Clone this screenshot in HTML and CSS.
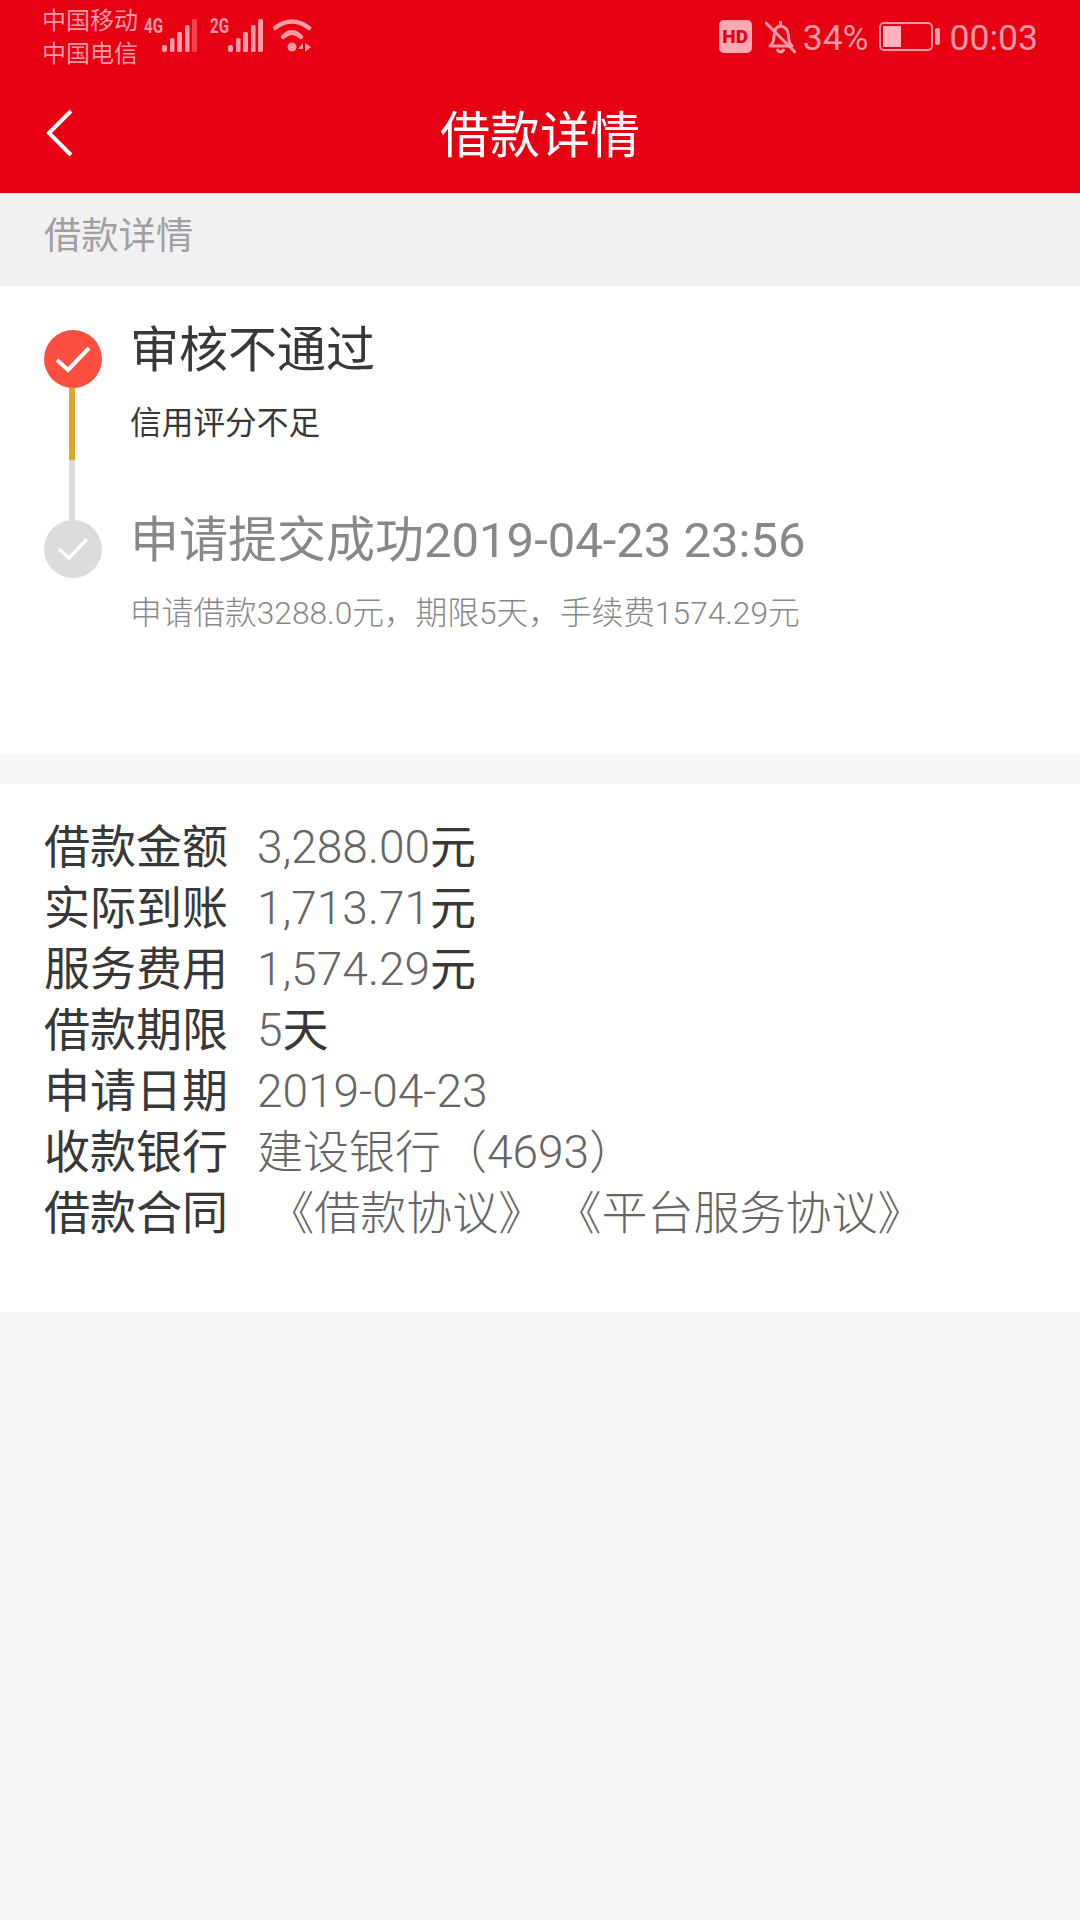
FILE: index.html
```html
<!DOCTYPE html>
<html lang="zh-CN">
<head>
<meta charset="utf-8">
<title>借款详情</title>
<link rel="stylesheet" href="styles.css">
</head>
<body>
<header class="app-header">
  <div class="status-bar">
    <div class="status-left">
      <div class="carriers"><span>中国移动</span><span>中国电信</span></div>
      <div class="signal">
        <span class="net">4G</span>
        <svg class="bars" width="36" height="34" viewBox="0 0 36 34"><g class="bar-fill"><rect x="0" y="26" width="5" height="7" rx="2"/><rect x="8" y="19" width="4.500" height="14" rx="1.500"/><rect x="15" y="13" width="5" height="20" rx="1.500"/><rect x="23" y="6" width="4.500" height="27" rx="1.500"/><rect class="bar-dim" x="30" y="0" width="5" height="33" rx="1.500"/></g></svg>
      </div>
      <div class="signal second">
        <span class="net">2G</span>
        <svg class="bars" width="36" height="34" viewBox="0 0 36 34"><g class="bar-fill"><rect x="0" y="26" width="5" height="7" rx="2"/><rect x="8" y="19" width="4.500" height="14" rx="1.500"/><rect x="15" y="13" width="5" height="20" rx="1.500"/><rect x="23" y="6" width="4.500" height="27" rx="1.500"/><rect x="30" y="0" width="5" height="33" rx="1.500"/></g></svg>
      </div>
      <svg class="wifi" width="40" height="34" viewBox="0 0 40 34">
        <path class="wifi-arc" d="M2 9 Q19 -4 36 9"/>
        <path class="wifi-arc" d="M10 18 Q19 9 28 18"/>
        <circle class="wifi-dot" cx="19" cy="28" r="4.500"/>
        <path class="wifi-dot" d="M30 24 L25 30 L30 30 Z M32 33 L32 24 L38 28 Z"/>
      </svg>
    </div>
    <div class="status-right">
      <span class="hd">HD</span>
      <svg class="bell" width="31" height="33" viewBox="0 0 31 33">
        <path class="stroke-pink" d="M5 25 Q9 22 9 15 Q9 6 15.500 5 Q23 6 23.500 15 Q23.500 22 27 25 Z"/>
        <path class="stroke-pink" d="M12.500 29 Q15.500 33 18.500 29"/>
        <path class="stroke-pink" d="M15.500 1 V5"/>
        <path class="stroke-pink" d="M1 2 L30 31"/>
      </svg>
      <span class="pct">34%</span>
      <div class="battery"><div class="battery-body"><div class="battery-level"></div></div><div class="battery-nub"></div></div>
      <span class="clock">00:03</span>
    </div>
  </div>
  <div class="nav-bar">
    <svg class="back" width="28" height="50" viewBox="0 0 28 50"><path d="M26 3 L4 25 L26 47"/></svg>
    <h1>借款详情</h1>
  </div>
</header>

<div class="section-label">借款详情</div>

<section class="timeline">
  <div class="step step-first">
    <div class="marker">
      <svg class="dot" width="58" height="58" viewBox="0 0 58 58"><circle class="dot-red" cx="29" cy="29" r="29"/><path class="dot-check" d="M13 30 L24 40 L45 18"/></svg>
      <div class="line line-orange"></div>
      <div class="line line-grey"></div>
    </div>
    <div class="step-body">
      <div class="step-title">审核不通过</div>
      <div class="step-note">信用评分不足</div>
    </div>
  </div>
  <div class="step step-muted">
    <div class="marker">
      <svg class="dot" width="58" height="58" viewBox="0 0 58 58"><circle class="dot-grey" cx="29" cy="29" r="29"/><path class="dot-check thin" d="M15 29 L25 38 L43 19"/></svg>
    </div>
    <div class="step-body">
      <div class="step-title">申请提交成功2019-04-23 23:56</div>
      <div class="step-note">申请借款3288.0元，期限5天，手续费1574.29元</div>
    </div>
  </div>
</section>

<section class="details">
  <div class="row"><span class="key">借款金额</span><span class="val">3,288.00<em>元</em></span></div>
  <div class="row"><span class="key">实际到账</span><span class="val">1,713.71<em>元</em></span></div>
  <div class="row"><span class="key">服务费用</span><span class="val">1,574.29<em>元</em></span></div>
  <div class="row"><span class="key">借款期限</span><span class="val">5<em>天</em></span></div>
  <div class="row"><span class="key">申请日期</span><span class="val">2019-04-23</span></div>
  <div class="row"><span class="key">收款银行</span><span class="val">建设银行（4693）</span></div>
  <div class="row"><span class="key">借款合同</span><span class="val"> 《借款协议》 《平台服务协议》</span></div>
</section>
</body>
</html>
```

FILE: styles.css
```css
* { box-sizing: border-box; }
html, body { margin: 0; padding: 0; }
body {
  width: 1080px;
  height: 1920px;
  background: #f7f7f7;
  font-family: Roboto, "Noto Sans CJK SC", sans-serif;
  overflow: hidden;
}
.app-header { background: #e60012; height: 193px; }
.status-bar {
  height: 72px;
  padding: 0 42px;
  display: flex;
  justify-content: space-between;
  align-items: flex-start;
  color: #ff9aa6;
}
.status-left { display: flex; align-items: flex-start; }
.carriers {
  width: 102px;
  padding-top: 5px;
  display: flex;
  flex-direction: column;
  font-size: 24px;
  line-height: 33px;
}
.signal { display: flex; align-items: flex-start; padding-top: 19px; }
.second { margin-left: 12px; }
.net {
  width: 18px;
  font-size: 21px;
  font-weight: 700;
  line-height: 15px;
  transform: scaleX(0.72);
  transform-origin: left center;
}
.bars { display: block; }
.bar-fill { fill: #ff9aa6; }
.bar-dim { fill: #f4404f; }
.wifi { margin: 19px 0 0 9px; display: block; }
.wifi-arc { fill: none; stroke: #ff9aa6; stroke-width: 4.500; stroke-linecap: round; }
.wifi-dot { fill: #ff9aa6; }
.status-right { display: flex; align-items: flex-start; padding-top: 20px; }
.hd {
  width: 33px;
  height: 33px;
  border-radius: 5px;
  background: #ffa8b2;
  color: #e60012;
  font-size: 19px;
  font-weight: 900;
  line-height: 33px;
  text-align: center;
}
.bell { margin: 1px 0 0 13px; display: block; }
.stroke-pink { fill: none; stroke: #ff9aa6; stroke-width: 3; stroke-linecap: round; stroke-linejoin: round; }
.pct, .clock { font-size: 35.500px; line-height: 36px; }
.pct { margin-left: 7px; }
.battery { margin: 2px 0 0 10px; display: flex; align-items: center; height: 29px; }
.battery-body {
  width: 54px;
  height: 29px;
  border: 2px solid #ff9aa6;
  border-radius: 5px;
  padding: 2px;
}
.battery-level { width: 18px; height: 100%; background: #ffb4bd; }
.battery-nub { width: 5px; height: 17px; margin-left: 2px; background: #ff9aa6; border-radius: 2px; }
.clock { margin-left: 10px; }
.nav-bar {
  position: relative;
  height: 121px;
  display: flex;
  align-items: center;
  justify-content: center;
}
.nav-bar h1 {
  margin: 0 0 -7px 0;
  color: #fff;
  font-size: 50px;
  font-weight: 400;
  line-height: 70px;
}
.back { position: absolute; left: 45px; top: 36px; }
.back path { fill: none; stroke: #fff; stroke-width: 4; }
.section-label {
  height: 93px;
  padding: 20px 0 0 44px;
  background: #f1f1f1;
  color: #a0a0a0;
  font-size: 37.300px;
  line-height: 46px;
}
.timeline {
  height: 468px;
  padding: 44px 0 0 44px;
  background: #fff;
  display: flex;
  flex-direction: column;
}
.step { display: flex; }
.step-first { height: 190px; }
.marker { width: 86px; flex: none; }
.dot { display: block; }
.dot-red { fill: #fc4f42; }
.dot-grey { fill: #dcdcdc; }
.dot-check { fill: none; stroke: #fff; stroke-width: 4; }
.dot-check.thin { stroke-width: 3.500; }
.line { width: 5.500px; margin-left: 25px; }
.line-orange { height: 72px; background: #e5a22f; }
.line-grey { height: 60px; background: #dcdcdc; }
.step-body { min-width: 0; }
.step-title {
  margin-top: -13px;
  color: #383838;
  font-size: 49px;
  line-height: 68px;
  white-space: nowrap;
}
.step-note {
  margin-top: 17px;
  color: #383838;
  font-size: 31.700px;
  line-height: 44px;
  white-space: nowrap;
}
.step-muted .step-title { color: #888; }
.step-muted .step-note { margin-top: 17px; color: #888; font-weight: 300; }
.details {
  margin-top: 30px;
  height: 528px;
  padding: 33px 0 0 44px;
  background: #fff;
}
.row {
  height: 61px;
  line-height: 61px;
  display: flex;
  align-items: baseline;
  white-space: pre;
}
.key { width: 213px; color: #383838; font-size: 46px; }
.val { color: #666; font-size: 46px; font-weight: 300; }
.val em { color: #383838; font-style: normal; font-weight: 400; }
```
